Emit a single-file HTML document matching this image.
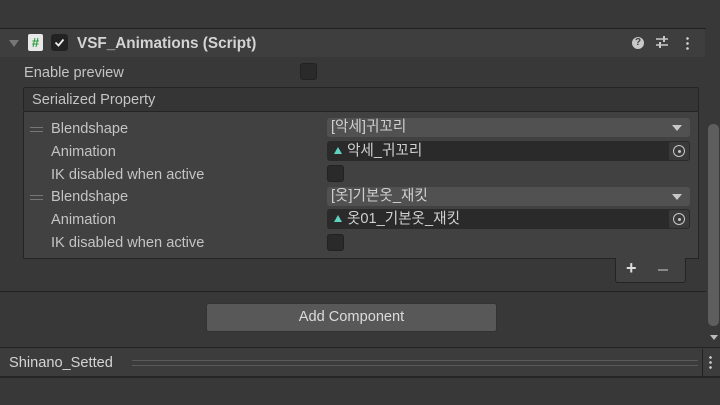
<!DOCTYPE html>
<html><head><meta charset="utf-8"><style>
*{margin:0;padding:0;box-sizing:border-box}
body{width:720px;height:405px;background:#383838;font-family:"Liberation Sans","Noto Sans CJK KR",sans-serif;font-size:14.6px;color:#c4c4c4;position:relative;overflow:hidden}
.a{position:absolute}
.lbl{position:absolute;line-height:17px}
.dd{position:absolute;left:327px;width:363px;height:19px;background:#515151;border-radius:3px;padding-left:4px;line-height:19px;color:#d0d0d0}
.dd:after{content:"";position:absolute;right:8px;top:7px;border-left:5px solid transparent;border-right:5px solid transparent;border-top:6px solid #c8c8c8}
.of{position:absolute;left:327px;width:363px;height:20px;background:#2a2a2a;border-radius:3px;padding-left:20px;line-height:20px;color:#d0d0d0}
.of .tri{position:absolute;left:7px;top:6px;border-left:4px solid transparent;border-right:4px solid transparent;border-bottom:7px solid #5fd3c1}
.of .tg{position:absolute;right:1px;top:1px;width:20px;height:18px;background:#3a3a3a;border-radius:2px}
.of .tg:before{content:"";position:absolute;left:4px;top:3px;width:12px;height:12px;border:1.5px solid #c8c8c8;border-radius:50%;box-sizing:border-box}
.of .tg:after{content:"";position:absolute;left:8.5px;top:7.5px;width:3px;height:3px;background:#c8c8c8;border-radius:50%}
.cb{position:absolute;left:327px;width:17px;height:17px;background:#2a2a2a;border:1px solid #222;border-radius:3px}
.hdl{position:absolute;left:30px;width:13px;height:5px;border-top:1px solid #777;border-bottom:1px solid #777}
</style></head><body>
<div class="a" style="left:0;top:28px;width:720px;height:1px;background:#1f1f1f"></div>
<div class="a" style="left:0;top:29px;width:705px;height:28px;background:#3e3e3e"></div>
<div class="a" style="left:9px;top:40px;border-left:5px solid transparent;border-right:5px solid transparent;border-top:7px solid #777"></div>
<div class="a" style="left:28px;top:34px;width:15px;height:17px;background:#e8e8e8;border-radius:2px;color:#2a9a3a;font-weight:bold;font-size:13px;text-align:center;line-height:17px">#</div>
<div class="a" style="left:51px;top:34px;width:17px;height:17px;background:#222;border-radius:3px"></div>
<svg class="a" style="left:51px;top:34px" width="17" height="17"><path d="M4.5 8.5l3 3 5-6" stroke="#eee" stroke-width="1.8" fill="none"/></svg>
<div class="lbl" style="left:77px;top:35px;font-weight:bold;font-size:15.3px;color:#d4d4d4">VSF_Animations (Script)</div>
<div class="a" style="left:632px;top:37px;width:12px;height:12px;border-radius:50%;background:#c8c8c8;color:#3e3e3e;font-size:10px;font-weight:bold;text-align:center;line-height:12px">?</div>
<svg class="a" style="left:655px;top:35px" width="14" height="14"><path d="M1 4h12M1 10h12" stroke="#c8c8c8" stroke-width="1.5"/><path d="M9 1v6M5 7v6" stroke="#c8c8c8" stroke-width="2"/></svg>
<div class="a" style="left:686px;top:36px;width:3px;height:14px;background:radial-gradient(circle,#c8c8c8 1.2px,transparent 1.5px) 0 0/3px 5px"></div>
<div class="lbl" style="left:24px;top:65px">Enable preview</div>
<div class="a" style="left:300px;top:63px;width:17px;height:17px;background:#2a2a2a;border:1px solid #222;border-radius:3px"></div>
<div class="a" style="left:23px;top:87px;width:676px;height:25px;background:#353535;border:1px solid #242424;border-radius:2px"></div>
<div class="lbl" style="left:32px;top:92px">Serialized Property</div>
<div class="a" style="left:23px;top:112px;width:676px;height:147px;background:#414141;border:1px solid #242424;border-top:none"></div>
<div class="a" style="left:615px;top:258px;width:71px;height:25px;background:#414141;border:1px solid #242424;border-top:none;border-radius:0 0 3px 3px"></div>
<div class="lbl" style="left:626px;top:260px;font-size:18px;color:#ddd;font-weight:bold">+</div>
<div class="a" style="left:658px;top:269px;width:10px;height:2px;background:#888"></div>
<div class="hdl" style="top:127px"></div>
<div class="lbl" style="left:51px;top:121px">Blendshape</div>
<div class="dd" style="top:118px">[악세]귀꼬리</div>
<div class="lbl" style="left:51px;top:144px">Animation</div>
<div class="of" style="top:141px"><span class="tri"></span>악세_귀꼬리<span class="tg"></span></div>
<div class="lbl" style="left:51px;top:167px">IK disabled when active</div>
<div class="cb" style="top:165px"></div>
<div class="hdl" style="top:195px"></div>
<div class="lbl" style="left:51px;top:189px">Blendshape</div>
<div class="dd" style="top:187px">[옷]기본옷_재킷</div>
<div class="lbl" style="left:51px;top:212px">Animation</div>
<div class="of" style="top:209px"><span class="tri"></span>옷01_기본옷_재킷<span class="tg"></span></div>
<div class="lbl" style="left:51px;top:235px">IK disabled when active</div>
<div class="cb" style="top:234px"></div>
<div class="a" style="left:0;top:291px;width:706px;height:1px;background:#222"></div>
<div class="a" style="left:206px;top:303px;width:291px;height:29px;background:#585858;border-radius:3px;border:1px solid #333;text-align:center;line-height:27px;color:#dcdcdc">Add Component</div>
<div class="a" style="left:706px;top:0;width:14px;height:348px;background:#383838"></div>
<div class="a" style="left:708px;top:124px;width:11px;height:202px;background:#5e5e5e;border-radius:5px"></div>
<div class="a" style="left:710px;top:335px;border-left:4px solid transparent;border-right:4px solid transparent;border-top:5px solid #bbb"></div>
<div class="a" style="left:0;top:347px;width:720px;height:1px;background:#222"></div>
<div class="a" style="left:0;top:348px;width:720px;height:28px;background:#3c3c3c"></div>
<div class="lbl" style="left:9px;top:355px;color:#d4d4d4">Shinano_Setted</div>
<div class="a" style="left:132px;top:360px;width:566px;height:6px;border-top:1px solid #5a5a5a;border-bottom:1px solid #5a5a5a"></div>
<div class="a" style="left:702px;top:349px;width:1px;height:27px;background:#222"></div>
<div class="a" style="left:709px;top:355px;width:3px;height:14px;background:radial-gradient(circle,#c8c8c8 1.2px,transparent 1.5px) 0 0/3px 5px"></div>
<div class="a" style="left:0;top:376px;width:720px;height:2px;background:#252525"></div>
</body></html>
